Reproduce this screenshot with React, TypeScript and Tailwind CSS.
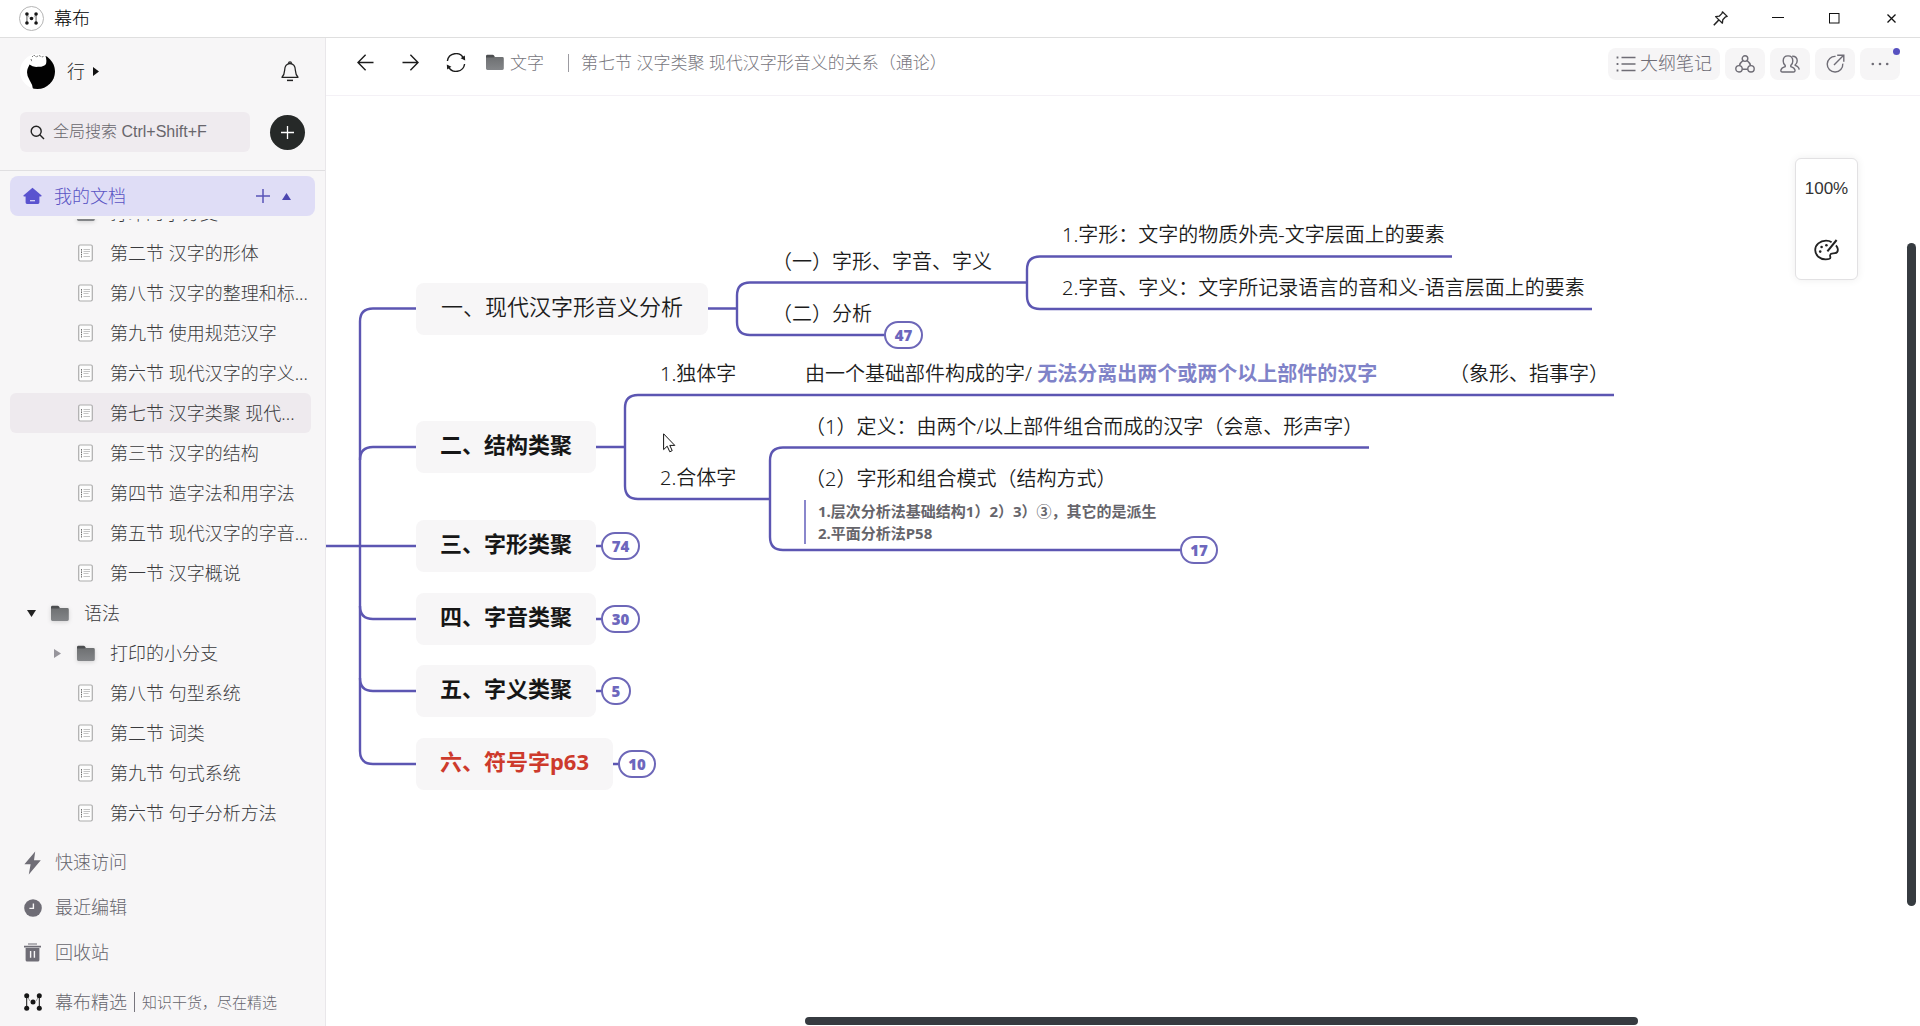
import type { ReactNode } from "react";

type TreeItem = {
  kind: "doc" | "folder";
  label: string;
  level: 1 | 2;
  open?: boolean;
  selected?: boolean;
};

const tree: TreeItem[] = [
  { kind: "folder", label: "打印的小分支", level: 2 },
  { kind: "doc", label: "第二节 汉字的形体", level: 2 },
  { kind: "doc", label: "第八节 汉字的整理和标...", level: 2 },
  { kind: "doc", label: "第九节 使用规范汉字", level: 2 },
  { kind: "doc", label: "第六节 现代汉字的字义...", level: 2 },
  { kind: "doc", label: "第七节 汉字类聚 现代...", level: 2, selected: true },
  { kind: "doc", label: "第三节 汉字的结构", level: 2 },
  { kind: "doc", label: "第四节 造字法和用字法", level: 2 },
  { kind: "doc", label: "第五节 现代汉字的字音...", level: 2 },
  { kind: "doc", label: "第一节 汉字概说", level: 2 },
  { kind: "folder", label: "语法", level: 1, open: true },
  { kind: "folder", label: "打印的小分支", level: 2 },
  { kind: "doc", label: "第八节 句型系统", level: 2 },
  { kind: "doc", label: "第二节 词类", level: 2 },
  { kind: "doc", label: "第九节 句式系统", level: 2 },
  { kind: "doc", label: "第六节 句子分析方法", level: 2 },
];

/* ---------- icons ---------- */

function FolderIcon({ className }: { className?: string }) {
  return (
    <svg width="18" height="17" viewBox="0 0 18 17" className={className} aria-hidden="true">
      <defs>
        <linearGradient id="folder" x1="0" y1="0" x2="0" y2="1">
          <stop offset="0" stopColor="#6e7072" />
          <stop offset="1" stopColor="#848689" />
        </linearGradient>
      </defs>
      <path d="M0 2.2Q0 .8 1.4 .8H6.6Q7.6 .8 8.2 1.8L9 3.2H16V6H0Z" fill="#4c4e50" />
      <path d="M0 3.6H7.4L8.6 3H16.4Q17.8 3 17.8 4.4V14.6Q17.8 16 16.4 16H1.4Q0 16 0 14.6Z" fill="url(#folder)" />
    </svg>
  );
}

function DocIcon() {
  return (
    <svg width="17" height="18" viewBox="0 0 17 18" aria-hidden="true">
      <rect x="1.7" y="1" width="13.6" height="16" rx="1.4" fill="#fdfdfd" stroke="#adadad" strokeWidth="1.2" />
      <path d="M4.5 5V13.5" stroke="#6d6d6d" strokeWidth="1" strokeDasharray="1.6 .8" />
      <path d="M6.5 5.5H13M6.5 7.5H13M6.5 9.5H11.5M6.5 12.5H13" stroke="#c4c4c4" strokeWidth="1.1" />
    </svg>
  );
}

function LogoMark({ size }: { size: number }) {
  return (
    <svg width={size} height={size} viewBox="0 0 18 18" fill="#161616" aria-hidden="true">
      <path d="M2.7 3V15M15.3 3V15" stroke="#161616" strokeWidth="1" />
      <circle cx="2.7" cy="2.8" r="2.5" />
      <circle cx="15.3" cy="2.8" r="2.5" />
      <circle cx="2.7" cy="15.2" r="2.5" />
      <circle cx="15.3" cy="15.2" r="2.5" />
      <path d="M3 3L6 8M15 3L12 8" stroke="#161616" strokeWidth=".4" />
      <circle cx="9" cy="9" r="2.5" />
    </svg>
  );
}

function Avatar() {
  return (
    <svg width="35" height="35" viewBox="0 0 35 35" aria-hidden="true">
      <defs>
        <clipPath id="face">
          <circle cx="17.5" cy="17.5" r="17.5" />
        </clipPath>
      </defs>
      <g clipPath="url(#face)">
        <rect width="35" height="35" fill="#fff" />
        <path
          d="M9.5 10.5Q13 13.5 18 12.8Q24 13 26 10Q27 6 25.5 2L36 0V36H13Q12.8 31 9.5 26Q6 21 7.5 15Z"
          fill="#020202"
        />
        <path d="M12 3L14 1L16 3L19 1.5L22 3L24.5 2M11 5L12 8" stroke="#555" strokeWidth=".8" fill="none" strokeDasharray="2 1" />
      </g>
    </svg>
  );
}

/* ---------- sidebar ---------- */

function TreeRow({ item }: { item: TreeItem }) {
  const indent = item.level === 1 ? "pl-[13px]" : "pl-[39px]";
  const bg = item.selected ? "bg-[#eeeaee]" : "";
  return (
    <li className="shrink-0">
      <button
        type="button"
        className={`flex h-10 w-full items-center gap-3 rounded-md text-left text-[18px] font-light text-[#3a3a3d] ${indent} ${bg}`}
      >
        <span className="flex w-4 shrink-0 justify-center">
          {item.kind === "folder" &&
            (item.open ? (
              <svg width="9" height="7" viewBox="0 0 9 7" aria-hidden="true">
                <path d="M0 0H9L4.5 7Z" fill="#222" />
              </svg>
            ) : (
              <svg width="7" height="9" viewBox="0 0 7 9" aria-hidden="true">
                <path d="M0 0L7 4.5L0 9Z" fill="#97959c" />
              </svg>
            ))}
        </span>
        <span className="flex w-[21px] shrink-0">
          {item.kind === "folder" ? <FolderIcon className="drop-shadow-sm" /> : <DocIcon />}
        </span>
        <span className="whitespace-nowrap">{item.label}</span>
      </button>
    </li>
  );
}

function ShortcutRow({ icon, label }: { icon: ReactNode; label: string }) {
  return (
    <button
      type="button"
      className="flex h-[45px] w-full items-center gap-3 pl-6 text-left text-[18px] font-light text-[#66656d]"
    >
      <span className="flex w-[19px] shrink-0">{icon}</span>
      {label}
    </button>
  );
}

function Sidebar() {
  return (
    <aside className="flex w-[326px] shrink-0 flex-col border-r border-[#e9e7ea] bg-[#f7f6f7]">
      <div className="flex h-[66px] items-center pl-5 pr-[22px]">
        <Avatar />
        <button type="button" className="ml-3 flex items-center gap-2 text-[18px] font-light text-[#222]">
          行
          <svg width="6" height="9" viewBox="0 0 6 9" aria-hidden="true">
            <path d="M0 0L6 4.5L0 9Z" fill="#111" />
          </svg>
        </button>
        <button type="button" aria-label="通知" className="ml-auto p-1">
          <svg width="18" height="21" viewBox="0 0 18 21" fill="none" stroke="#222" strokeWidth="1.3" aria-hidden="true">
            <path d="M7.6 2.2a1.4 1.4 0 0 1 2.8 0M1 16.3H17C15.4 14.6 14.6 13 14.4 9.5C14.3 4.9 12.2 2.6 9 2.6S3.7 4.9 3.6 9.5C3.4 13 2.6 14.6 1 16.3Z" strokeLinejoin="round" />
            <path d="M6 19.4H12" strokeWidth="1.5" />
          </svg>
        </button>
      </div>

      <div className="flex items-center gap-5 border-b border-[#e0dfe1] px-5 pb-[18px] pt-2">
        <label className="flex h-10 w-[230px] items-center gap-2 rounded-md bg-[#efebef] pl-[10px]">
          <svg width="15" height="15" viewBox="0 0 15 15" fill="none" stroke="#222" strokeWidth="1.4" aria-hidden="true">
            <circle cx="6.2" cy="6.2" r="5" />
            <path d="M9.8 9.8L14 14" />
          </svg>
          <input
            type="text"
            aria-label="全局搜索"
            placeholder="全局搜索 Ctrl+Shift+F"
            className="w-48 bg-transparent text-[16px] text-[#444] outline-none placeholder:font-light placeholder:text-[#68666c] [font-family:'Liberation_Sans','Noto_Sans_CJK_SC',sans-serif]"
          />
        </label>
        <button
          type="button"
          aria-label="新建"
          className="flex size-[35px] items-center justify-center rounded-full bg-[#262928]"
        >
          <svg width="13" height="13" viewBox="0 0 13 13" stroke="#fff" strokeWidth="1.3" aria-hidden="true">
            <path d="M6.5 0V13M0 6.5H13" />
          </svg>
        </button>
      </div>

      <div className="mx-[10px] mt-[5px] flex h-10 items-center rounded-lg bg-[#dfddf6] pl-[13px] pr-6 text-[#5a54c4]">
        <svg width="19" height="18" viewBox="0 0 19 18" fill="#5a53cf" aria-hidden="true">
          <path d="M9.5 .8L18.6 8.4Q18.8 9.4 17.8 9.4H16.4V15.6Q16.4 17 15 17H4Q2.6 17 2.6 15.6V9.4H1.2Q.2 9.4 .4 8.4Z" />
          <path d="M7 13.7H12" stroke="#dfddf6" strokeWidth="1.2" />
        </svg>
        <a href="#docs" className="ml-3 text-[18px] font-light">
          我的文档
        </a>
        <button type="button" aria-label="添加文档" className="ml-auto">
          <svg width="14" height="14" viewBox="0 0 14 14" stroke="#5a54b8" strokeWidth="1.5" aria-hidden="true">
            <path d="M7 0V14M0 7H14" />
          </svg>
        </button>
        <button type="button" aria-label="收起" className="ml-3">
          <svg width="9" height="7" viewBox="0 0 9 7" aria-hidden="true">
            <path d="M0 7H9L4.5 0Z" fill="#4c46b0" />
          </svg>
        </button>
      </div>

      <ul className="ml-[10px] mr-[14px] mt-[3px] flex min-h-0 flex-1 flex-col justify-end overflow-hidden">
        {tree.map((item, i) => (
          <TreeRow key={i} item={item} />
        ))}
      </ul>

      <nav className="mt-[7px]">
        <ShortcutRow
          label="快速访问"
          icon={
            <svg width="17" height="24" viewBox="0 0 17 24" fill="#6f6d76" aria-hidden="true">
              <path d="M11.2 .6L.4 13.2H6.6L4.8 23.4L16.8 9.2H10Z" />
            </svg>
          }
        />
        <ShortcutRow
          label="最近编辑"
          icon={
            <svg width="18" height="18" viewBox="0 0 18 18" aria-hidden="true">
              <circle cx="9" cy="9" r="8.8" fill="#6f6d76" />
              <path d="M9.4 4.6V9.4H5.4" stroke="#f7f6f7" strokeWidth="1.4" fill="none" />
            </svg>
          }
        />
        <ShortcutRow
          label="回收站"
          icon={
            <svg width="17" height="19" viewBox="0 0 17 19" fill="#6f6d76" aria-hidden="true">
              <path d="M4 .4H13V1.6H4ZM0 2.8H17V4.6H0ZM1.6 5H15.4V17Q15.4 18.6 13.8 18.6H3.2Q1.6 18.6 1.6 17Z" />
              <path d="M6.6 8V14.8M10.4 8V14.8" stroke="#f7f6f7" strokeWidth="1.4" />
            </svg>
          }
        />
      </nav>
      <a href="#selected" className="flex h-[51px] items-center gap-3 pl-6 pt-[3px] font-light text-[#66656d]">
        <span className="flex w-[19px] shrink-0">
          <LogoMark size={18} />
        </span>
        <span className="flex items-center gap-[7px] whitespace-nowrap text-[18px]">
          幕布精选
          <span className="h-5 w-px bg-[#77757d]" />
          <span className="text-[15px]">知识干货，尽在精选</span>
        </span>
      </a>
    </aside>
  );
}

/* ---------- bars ---------- */

function TitleBar() {
  return (
    <header className="flex h-[38px] shrink-0 items-center border-b border-[#dfdfdf] bg-white pb-px pl-[19px]">
      <span className="flex size-[25px] items-center justify-center rounded-full border border-[#b5b5b5]">
        <LogoMark size={13} />
      </span>
      <h1 className="ml-[10px] text-[18px] font-light text-black">幕布</h1>
      <div className="ml-auto flex">
        <button type="button" aria-label="置顶" className="flex h-9 w-[57px] items-center justify-center">
          <svg width="15" height="15" viewBox="0 0 15 15" fill="none" stroke="#222" strokeWidth="1.3" aria-hidden="true">
            <path d="M9.4 .8L14.2 5.4L12.6 5.8L9.8 8.8L9.4 12.2L2.6 5.6L6.2 5.2L9 2.4Z" strokeLinejoin="round" />
            <path d="M5.8 9L.8 14.2" strokeWidth="1.6" />
          </svg>
        </button>
        <button type="button" aria-label="最小化" className="flex h-9 w-[57px] items-center justify-center">
          <svg width="12" height="12" viewBox="0 0 12 12" stroke="#111" strokeWidth="1" aria-hidden="true">
            <path d="M0 5.5H12" />
          </svg>
        </button>
        <button type="button" aria-label="最大化" className="flex h-9 w-[57px] items-center justify-center">
          <svg width="11" height="11" viewBox="0 0 11 11" fill="none" stroke="#111" strokeWidth="1" aria-hidden="true">
            <rect x=".5" y=".5" width="9.5" height="9.5" />
          </svg>
        </button>
        <button type="button" aria-label="关闭" className="flex h-9 w-[57px] items-center justify-center">
          <svg width="9" height="9" viewBox="0 0 9 9" stroke="#111" strokeWidth="1.3" aria-hidden="true">
            <path d="M.5 .5L8.5 8.5M8.5 .5L.5 8.5" />
          </svg>
        </button>
      </div>
    </header>
  );
}

function ToolButton({ label, children }: { label: string; children: ReactNode }) {
  return (
    <button
      type="button"
      aria-label={label}
      className="relative flex h-8 w-10 items-center justify-center rounded-lg bg-[#f6f5f6] text-[#6f6d76]"
    >
      {children}
    </button>
  );
}

function Toolbar() {
  return (
    <div className="flex h-[58px] shrink-0 items-center border-b border-[#f4f1f6] pb-2 pl-[17px] pr-5">
      <button type="button" aria-label="后退" className="flex w-[45px] justify-center">
        <svg width="17" height="17" viewBox="0 0 17 17" fill="none" stroke="#1c1c1c" strokeWidth="1.4" aria-hidden="true">
          <path d="M16.5 8.5H1.2M8.6 .8L1 8.5L8.6 16.2" />
        </svg>
      </button>
      <button type="button" aria-label="前进" className="flex w-[45px] justify-center">
        <svg width="17" height="17" viewBox="0 0 17 17" fill="none" stroke="#1c1c1c" strokeWidth="1.4" aria-hidden="true">
          <path d="M.5 8.5H15.8M8.4 .8L16 8.5L8.4 16.2" />
        </svg>
      </button>
      <button type="button" aria-label="刷新" className="flex w-[45px] justify-center">
        <svg width="20" height="19" viewBox="0 0 20 19" fill="none" stroke="#1c1c1c" strokeWidth="1.4" aria-hidden="true">
          <path d="M1.4 8A8.6 8.6 0 0 1 17.6 5.4M18.6 11A8.6 8.6 0 0 1 2.4 13.6" />
          <path d="M14.6 5.2L19.2 7.6L18.8 2.6ZM5.4 13.8L.8 11.4L1.2 16.4Z" fill="#1c1c1c" stroke="none" />
        </svg>
      </button>
      <a href="#folder" className="ml-2 flex items-center gap-[6px] text-[17px] font-light text-[#77767d]">
        <FolderIcon />
        文字
      </a>
      <span className="ml-6 h-[18px] w-px bg-[#9c9ba1]" />
      <h2 className="ml-3 whitespace-nowrap text-[17px] font-light text-[#77767d]">
        第七节 汉字类聚 现代汉字形音义的关系（通论）
      </h2>

      <div className="ml-auto flex items-center gap-[5px] pt-[2px]">
        <button
          type="button"
          className="flex h-8 w-28 items-center justify-center gap-1 rounded-lg bg-[#f6f5f6] text-[18px] font-light text-[#6f6d76]"
        >
          <svg width="20" height="16" viewBox="0 0 20 16" stroke="#6f6d76" strokeWidth="1.3" aria-hidden="true">
            <path d="M5.5 1.5H19.5M5.5 8H19.5M5.5 14.5H19.5" />
            <path d="M.6 1.5H2.4M.6 8H2.4M.6 14.5H2.4" strokeWidth="1.8" />
          </svg>
          大纲笔记
        </button>
        <ToolButton label="思维导图">
          <svg width="20" height="18" viewBox="0 0 20 18" fill="none" stroke="currentColor" strokeWidth="1.4" aria-hidden="true">
            <circle cx="10" cy="3.6" r="2.8" />
            <circle cx="4" cy="13.8" r="3.2" />
            <circle cx="16" cy="13.8" r="3.2" />
            <path d="M7.9 5.6Q4.9 7.8 4.4 10.6M12.1 5.6Q15.1 7.8 15.6 10.6M7.2 14.2H12.8" />
          </svg>
        </ToolButton>
        <ToolButton label="协作">
          <svg width="20" height="18" viewBox="0 0 20 18" fill="none" stroke="currentColor" strokeWidth="1.4" aria-hidden="true">
            <path d="M8 .9C11 .9 12.8 3 12.8 6C12.8 8.2 12 9.6 10.8 10.4V11.6C13 12.2 14.6 13 15 15.2Q15.2 17 13.4 17H2.4Q.6 17 .9 15.2C1.3 13 3 12.2 5.2 11.6V10.4C4 9.6 3.2 8.2 3.2 6C3.2 3 5 .9 8 .9Z" />
            <path d="M12.2 1.2C15.4 1 17.2 3 17.2 5.8C17.2 7.6 16.4 9 15.2 9.8V10.4C17.6 11.2 19 12.2 19.2 14.6" />
          </svg>
        </ToolButton>
        <ToolButton label="分享">
          <svg width="19" height="19" viewBox="0 0 19 19" fill="none" stroke="currentColor" strokeWidth="1.4" aria-hidden="true">
            <path d="M9.6 2.4A7.8 7.8 0 1 0 16.8 9.6M8 11L17.4 1.6M11.2 1.2H17.8V7.8" />
          </svg>
        </ToolButton>
        <ToolButton label="更多">
          <svg width="18" height="4" viewBox="0 0 18 4" fill="currentColor" aria-hidden="true">
            <circle cx="1.8" cy="2" r="1.3" />
            <circle cx="9" cy="2" r="1.3" />
            <circle cx="16.2" cy="2" r="1.3" />
          </svg>
          <span className="absolute right-0 top-0 size-[7px] rounded-full bg-[#5650c0]" />
        </ToolButton>
      </div>
    </div>
  );
}

/* ---------- mind map ---------- */

const branches = [
  { label: "一、现代汉字形音义分析", place: "left-[90px] top-[187px] w-[292px]", tone: "font-[350] text-[#1c1c1c]" },
  { label: "二、结构类聚", place: "left-[90px] top-[325px] w-[180px]", tone: "font-bold text-[#161616]" },
  { label: "三、字形类聚", place: "left-[90px] top-[424px] w-[180px]", tone: "font-bold text-[#161616]" },
  { label: "四、字音类聚", place: "left-[90px] top-[497px] w-[180px]", tone: "font-bold text-[#161616]" },
  { label: "五、字义类聚", place: "left-[90px] top-[569px] w-[180px]", tone: "font-bold text-[#161616]" },
  { label: "六、符号字p63", place: "left-[90px] top-[642px] w-[197px]", tone: "font-bold text-[#cd3a2c]" },
];

const leaves = [
  { label: "（一）字形、字音、字义", place: "left-[446px] top-[152px]" },
  { label: "（二）分析", place: "left-[446px] top-[204px]" },
  { label: "1.字形：文字的物质外壳-文字层面上的要素", place: "left-[736px] top-[125px]" },
  { label: "2.字音、字义：文字所记录语言的音和义-语言层面上的要素", place: "left-[736px] top-[178px]" },
  { label: "1.独体字", place: "left-[334px] top-[264px]" },
  { label: "2.合体字", place: "left-[334px] top-[368px]" },
  { label: "（1）定义：由两个/以上部件组合而成的汉字（会意、形声字）", place: "left-[479px] top-[317px]" },
  { label: "（2）字形和组合模式（结构方式）", place: "left-[479px] top-[369px]" },
];

const badges = [
  { count: 47, place: "left-[558px] top-[225px] w-[39px]" },
  { count: 74, place: "left-[275px] top-[436px] w-[39px]" },
  { count: 30, place: "left-[275px] top-[509px] w-[39px]" },
  { count: 5, place: "left-[275px] top-[581px] w-[30px]" },
  { count: 10, place: "left-[292px] top-[654px] w-[38px]" },
  { count: 17, place: "left-[854px] top-[440px] w-[38px]" },
];

function Connectors() {
  return (
    <svg
      width="1300"
      height="720"
      viewBox="0 0 1300 720"
      fill="none"
      stroke="#5c56b2"
      strokeWidth="2.4"
      className="absolute left-0 top-0"
      aria-hidden="true"
    >
      <path d="M0 450H90" />
      <path d="M90 212.5H47Q34 212.5 34 225.5V655Q34 668 47 668H90" />
      <path d="M90 351H47Q34 351 34 364M34 510Q34 523 47 523H90M34 582Q34 595 47 595H90" />
      <path d="M382 212.5H411M701 186.5H424Q411 186.5 411 199.5V226Q411 239 424 239H560" />
      <path d="M1126 160.5H714Q701 160.5 701 173.5V200Q701 213 714 213H1266" />
      <path d="M270 351H299M1288 299H312Q299 299 299 312V390Q299 403 312 403H444" />
      <path d="M1043 351.5H457Q444 351.5 444 364.5V441Q444 454 457 454H855" />
      <path d="M270 450H276M270 523H276M270 595H276M287 668H293" />
    </svg>
  );
}

function MindMap() {
  return (
    <section className="relative min-h-0 flex-1 overflow-hidden bg-white">
      <Connectors />

      {branches.map((b) => (
        <div
          key={b.label}
          className={`absolute flex h-[52px] items-center justify-center whitespace-nowrap rounded-lg bg-[#f7f6f7] pb-[6px] text-[22px] ${b.place} ${b.tone}`}
        >
          {b.label}
        </div>
      ))}

      {leaves.map((l) => (
        <p
          key={l.label}
          className={`absolute whitespace-nowrap text-[20px] font-[350] leading-7 text-[#1c1c1c] ${l.place}`}
        >
          {l.label}
        </p>
      ))}

      <p className="absolute left-[479px] top-[264px] whitespace-pre text-[20px] font-[350] leading-7 text-[#1c1c1c]">
        由一个基础部件构成的字/ <strong className="font-bold text-[#7f82c8]">无法分离出两个或两个以上部件的汉字</strong>
      </p>
      <p className="absolute left-[1123px] top-[264px] whitespace-nowrap text-[20px] font-[350] leading-7 text-[#1c1c1c]">
        （象形、指事字）
      </p>

      <div className="absolute left-[478px] top-[404px] whitespace-nowrap border-l-2 border-[#8a87cc] pl-3 text-[15px] font-bold leading-[22px] text-[#66656b]">
        <p>1.层次分析法基础结构1）2）3）③，其它的是派生</p>
        <p>2.平面分析法P58</p>
      </div>

      {badges.map((b) => (
        <button
          key={b.count}
          type="button"
          className={`absolute flex h-7 items-center justify-center rounded-full border-2 border-[#6d67b8] bg-white text-[15px] font-black text-[#6d67bd] ${b.place}`}
        >
          {b.count}
        </button>
      ))}

      <svg width="13" height="20" viewBox="0 0 13 20" className="absolute left-[337px] top-[337px]" aria-hidden="true">
        <path
          d="M.6 .8V16.6L4.2 13.2L6.8 18.8L9.2 17.6L6.8 12.4H11.8Z"
          fill="#fff"
          stroke="#111"
          strokeWidth="1"
          strokeLinejoin="round"
        />
      </svg>

      <div className="absolute right-[62px] top-[62px] flex h-[122px] w-[63px] flex-col items-center rounded-md border border-[#e2e1e3] bg-white pb-[18px] pt-4 shadow-[0_0_8px_rgba(0,0,0,0.07)]">
        <button type="button" className="text-[17px] leading-7 text-[#333] [font-family:'Liberation_Sans',sans-serif]">
          100%
        </button>
        <button type="button" aria-label="主题" className="mt-auto">
          <svg width="25" height="22" viewBox="0 0 25 22" fill="none" stroke="#222" strokeWidth="1.8" aria-hidden="true">
            <path d="M17.6 3.2C16 2 14 1.6 12 1.6C6 1.6 1.2 5.8 1.2 11C1.2 16.4 6 20.4 11.6 20.4C14.4 20.4 16.4 20 16.4 18.6C16.4 17.6 15.8 17 16.2 15.8C16.8 13.8 19 14.6 21 14.2C23.4 13.8 24 12 23.8 10.2C23.6 8.8 23 7.6 22 6.4" />
            <path d="M22.6 1L13.4 12.4" strokeWidth="2" />
            <g fill="#222" stroke="none">
              <circle cx="6.2" cy="12.6" r="1.3" />
              <circle cx="7.6" cy="8" r="1.3" />
              <circle cx="12.4" cy="6.2" r="1.3" />
            </g>
          </svg>
        </button>
      </div>

      <div className="absolute right-1 top-[147px] h-[663px] w-[9px] rounded-full bg-[#363b40]" />
      <div className="absolute bottom-px left-[479px] h-2 w-[833px] rounded-full bg-[#363b40]" />
    </section>
  );
}

export default function App() {
  return (
    <div className="flex h-screen flex-col overflow-hidden bg-white [font-family:'Noto_Sans','Noto_Sans_CJK_SC',sans-serif]">
      <TitleBar />
      <div className="flex min-h-0 flex-1">
        <Sidebar />
        <main className="flex min-w-0 flex-1 flex-col">
          <Toolbar />
          <MindMap />
        </main>
      </div>
    </div>
  );
}
